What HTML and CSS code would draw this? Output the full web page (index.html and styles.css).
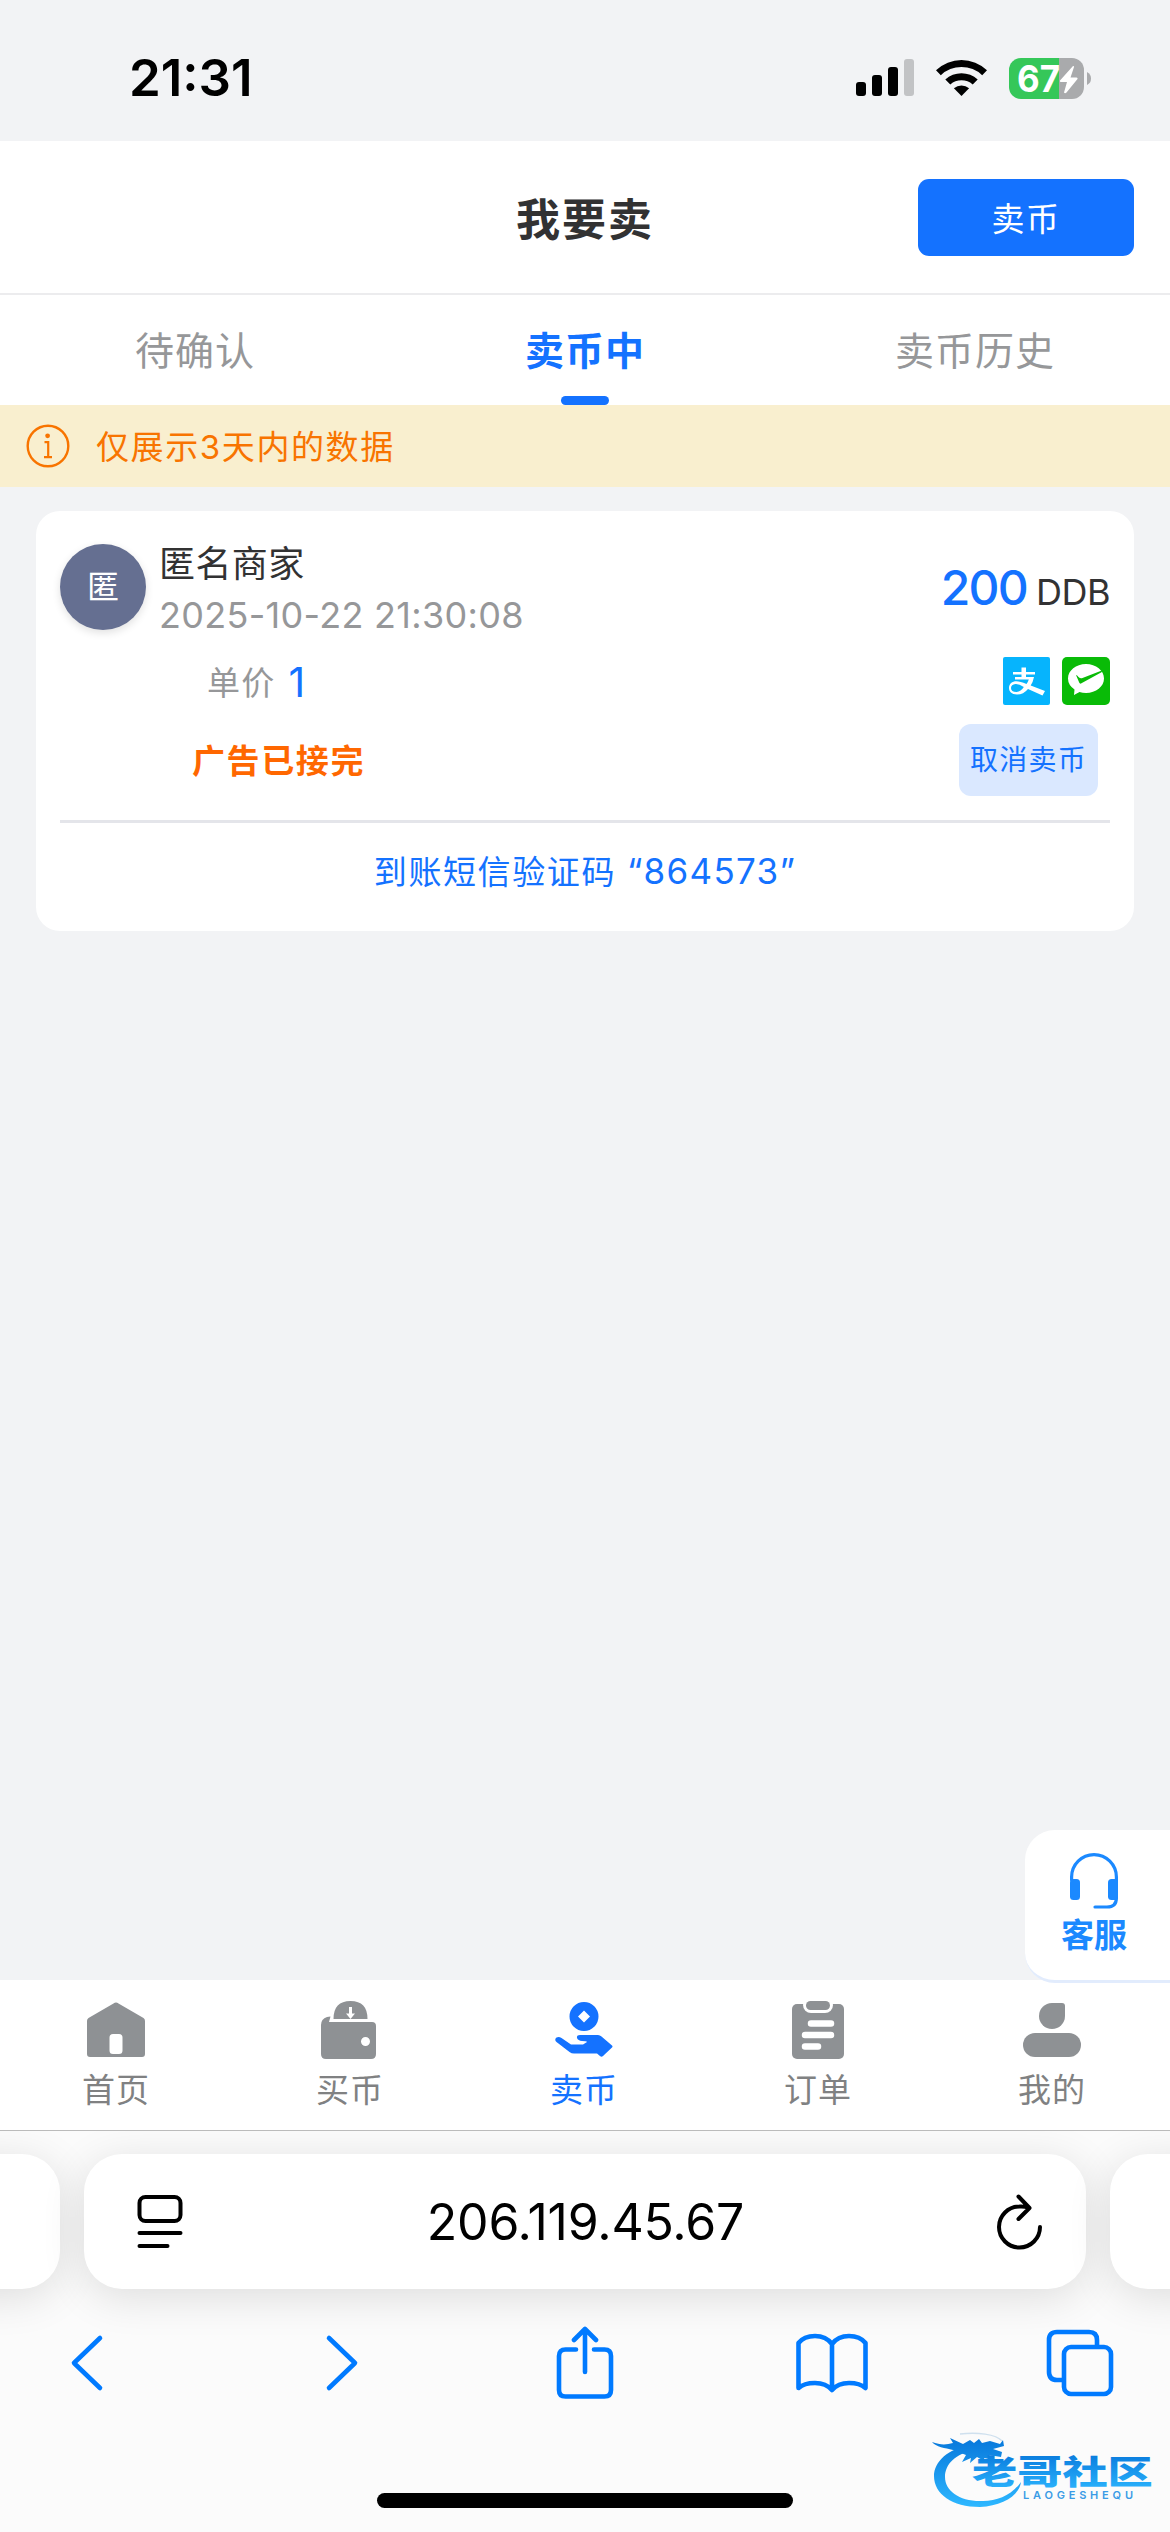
FILE: index.html
```html
<!DOCTYPE html>
<html lang="zh-CN">
<head>
<meta charset="utf-8">
<title>我要卖</title>
<link rel="stylesheet" href="styles.css">
</head>
<body>
<div class="screen">
  <header class="status">
    <span class="clock">21:31</span>
    <div class="status-icons">
      <svg class="signal" width="58" height="38" viewBox="0 0 58 38">
        <rect x="0" y="23" width="10" height="14" rx="3"/><rect x="16" y="16" width="10" height="21" rx="3"/>
        <rect x="32" y="8" width="10" height="29" rx="3"/><rect x="48" y="0" width="10" height="37" rx="3" fill="#c2c3c5"/>
      </svg>
      <svg class="wifi" width="52" height="38" viewBox="0 0 52 38">
        <path d="M0 11.2A37 37 0 0 1 51 11.2L46.200 16.200A30 30 0 0 0 4.800 16.200Z"/>
        <path d="M9.300 20.500A24 24 0 0 1 41.700 20.500L36.700 25.500A17 17 0 0 0 14.300 25.500Z"/>
        <path d="M17.900 29.200A12.500 12.500 0 0 1 33.100 29.200L25.500 37Z"/>
      </svg>
      <svg class="battery" width="83" height="61" viewBox="0 -10 83 61">
        <path d="M12 0H50V41H12A12 12 0 0 1 0 29V12A12 12 0 0 1 12 0Z" fill="#35c759"/>
        <path d="M50 0H63A12 12 0 0 1 75 12V29A12 12 0 0 1 63 41H50Z" fill="#a9aaac"/>
        <path d="M78 14Q82 16 82 20.500T78 27Z" fill="#a9aaac"/>
        <text class="battery-text" x="8" y="34" textLength="43" lengthAdjust="spacingAndGlyphs">67</text>
        <path d="M64 8L51 22.500Q50.500 24 52 24H58L55 34.500Q56 36 57.500 34.500L68.500 21Q69 19.500 67.500 19.500H61.500L65 9Q65 7.500 64 8Z" fill="#fff"/>
      </svg>
    </div>
  </header>

  <div class="titlebar">
    <h1>我要卖</h1>
    <button class="sell-btn">卖币</button>
  </div>

  <nav class="tabs">
    <a class="tab">待确认</a>
    <a class="tab active">卖币中</a>
    <a class="tab">卖币历史</a>
  </nav>

  <div class="notice">
    <svg width="44" height="44" viewBox="0 0 44 44" fill="none" stroke="#f87400">
      <circle cx="22" cy="22" r="20.300" stroke-width="2.400"/>
      <circle cx="21.600" cy="11.800" r="2.400" fill="#f87400" stroke="none"/>
      <path d="M18.500 18.200H22.200V33M18 33.200H26" stroke-width="2.200"/>
    </svg>
    <span>仅展示3天内的数据</span>
  </div>

  <main class="content">
    <section class="card">
      <div class="merchant">
        <div class="avatar">匿</div>
        <div class="who"><div class="name">匿名商家</div><div class="date">2025-10-22 21:30:08</div></div>
        <div class="amount"><b>200</b><span>DDB</span></div>
      </div>
      <div class="price-row">
        <span class="price-label">单价</span><span class="price">1</span>
        <div class="pay">
          <svg width="47" height="48" viewBox="0 0 47 48">
            <rect width="47" height="48" rx="2" fill="#06b4fd"/>
            <path d="M18.500 10.500H23V15H32V17.500H23V20H31Q30 25 27.700 28.500L42 34L39.500 38.500L25 32Q20.500 37.500 14 37.500C8.500 37.500 6 34.500 6 31C6 27 9 24.300 13.500 24.300Q17 24.300 23.500 27Q25 25 25.800 22.500H12V20H18.500V17.500H10V15H18.500Z" fill="#fff"/>
            <path d="M20.800 30Q16 27 12.500 27Q8 27.500 8 31Q8 35 13.500 35Q18 34.500 20.800 30Z" fill="#06b4fd"/>
          </svg>
          <svg width="48" height="48" viewBox="0 0 48 48">
            <rect width="48" height="48" rx="5" fill="#09bb07"/>
            <path d="M24 7C14 7 6 13.500 6 21.500Q6 28 12.500 32.500L12 38L17.500 35Q20.500 36 24 36C34 36 42 29.500 42 21.500C42 13.500 34 7 24 7Z" fill="#fff"/>
            <path d="M14 18Q15 18 16.500 20Q18.500 22 20.500 21L40.500 13.300L39.500 15.200L19 26.500Q17.800 27 17.200 25.600Z" fill="#09bb07"/>
          </svg>
        </div>
      </div>
      <div class="state-row">
        <span class="state">广告已接完</span>
        <button class="cancel">取消卖币</button>
      </div>
      <div class="code">到账短信验证码 <span class="digits">“864573”</span></div>
    </section>
  </main>

  <aside class="service">
    <svg width="52" height="58" viewBox="0 0 52 58" fill="none" stroke="#1b89ff" stroke-width="3.200" stroke-linecap="round">
      <path d="M3.600 27V24A22.400 22.400 0 0 1 48.400 24V45Q48.400 54 39 54H27"/>
      <rect x="2" y="26" width="10" height="21" rx="3.500" fill="#1b89ff" stroke="none"/>
      <rect x="40" y="26" width="10" height="21" rx="3.500" fill="#1b89ff" stroke="none"/>
    </svg>
    <span>客服</span>
  </aside>

  <nav class="bottom">
    <a><svg width="60" height="60" viewBox="0 0 60 60"><path fill-rule="evenodd" d="M27.500 3.500Q30 1.700 32.500 3.500L57.500 18Q59 19 59 21V54Q59 57 56 57H4Q1 57 1 54V21Q1 19 2.500 18ZM27 34Q23.500 34 23.500 37.500V50.500Q23.500 54 27 54H33Q36.500 54 36.500 50.500V37.500Q36.500 34 33 34Z"/></svg><span>首页</span></a>
    <a><svg width="60" height="60" viewBox="0 0 60 60"><path fill-rule="evenodd" d="M1 25Q1 19 7 17L10.500 16.500L9 22H52Q56 22 56 26V54Q56 59 51 59H6Q1 59 1 54ZM45.500 37A4.500 4.500 0 1 0 45.500 46A4.500 4.500 0 1 0 45.500 37ZM13.500 19Q13.500 1 30.500 1T47.500 19ZM29 7V13.500H26L30.500 19L35 13.500H32V7Z"/></svg><span>买币</span></a>
    <a class="on"><svg width="60" height="60" viewBox="0 0 60 60"><path fill-rule="evenodd" d="M30 2A14.500 14.500 0 1 0 30 31A14.500 14.500 0 1 0 30 2ZM30 10.500L36 16.500L30 22.500L24 16.500ZM23 38Q22.500 35 26 35H44Q46 35 47.500 36.500L58 45.500Q59 46.500 58 47.500L49 56Q47.500 57.500 46 56L43 53.500H20Q17.500 53.500 15.500 52L2.500 42Q0 39.500 2.500 37.500Q5 36.500 7.500 38L17 44.500H29L33 42Q32.500 41 28 41Q24 40.500 23 38Z"/></svg><span>卖币</span></a>
    <a><svg width="60" height="60" viewBox="0 0 60 60"><rect x="4" y="4" width="52" height="55" rx="5"/><rect x="15" y="-3" width="30" height="16" rx="8" fill="#fff"/><rect x="18" y="1" width="24" height="9" rx="4.500"/><g stroke="#fff" stroke-width="6.500" stroke-linecap="round"><path d="M23 23.500H43M17 35H43M17 46.500H30"/></g></svg><span>订单</span></a>
    <a><svg width="60" height="60" viewBox="0 0 60 60"><path d="M30 3H40Q43 3 43 6V16A13 13 0 1 1 30 3Z"/><rect x="1" y="33" width="58" height="24" rx="12"/></svg><span>我的</span></a>
  </nav>

  <footer class="browser">
    <div class="address-row">
      <div class="peek"></div>
      <div class="address">
        <svg width="46" height="56" viewBox="0 0 46 56" fill="none" stroke="#000" stroke-width="4" stroke-linecap="round"><rect x="2.500" y="3" width="41" height="24" rx="6"/><path d="M2.500 39H43.500M2.500 52H30.500"/></svg>
        <span>206.119.45.67</span>
        <svg width="46" height="56" viewBox="0 0 46 56" fill="none" stroke="#000" stroke-width="4" stroke-linecap="round" stroke-linejoin="round"><path d="M43 33A20.500 20.500 0 1 1 22.500 12.500Q27 12 32 14M21.500 2.500L32.500 14L21.500 25"/></svg>
      </div>
      <div class="peek"></div>
    </div>
    <div class="tools">
      <svg width="34" height="58" viewBox="0 0 34 58"><path d="M30 4L4 29L30 54"/></svg>
      <svg width="34" height="58" viewBox="0 0 34 58"><path d="M4 4L30 29L4 54"/></svg>
      <svg width="60" height="74" viewBox="0 0 60 74"><path d="M21 23.500H10.500Q4 23.500 4 30V64Q4 70.500 10.500 70.500H49.500Q56 70.500 56 64V30Q56 23.500 49.500 23.500H39M30 46V4M19 14L30 3L41 14"/></svg>
      <svg width="74" height="64" viewBox="0 0 74 64"><path d="M37 13Q31 5 20 5Q9 5 3.500 12V57Q9 52 20 52Q31 52 37 59Q43 52 54 52Q65 52 70.500 57V12Q65 5 54 5Q43 5 37 13V59"/></svg>
      <svg width="70" height="68" viewBox="0 0 70 68"><path d="M18 51H12Q4 51 4 43V11Q4 3 12 3H44Q52 3 52 11V17"/><rect x="19" y="18" width="47" height="47" rx="7"/></svg>
    </div>
    <div class="home-bar"></div>
    <svg class="watermark" width="226" height="80" viewBox="0 0 226 80">
      <defs><linearGradient id="ink" x1="0" y1="0" x2="0" y2="1"><stop offset="0" stop-color="#0879dc"/><stop offset="1" stop-color="#2db7ff"/></linearGradient>
      <linearGradient id="ring" gradientUnits="userSpaceOnUse" x1="0" y1="10" x2="0" y2="76"><stop offset="0" stop-color="#0879dc"/><stop offset="1" stop-color="#2db7ff"/></linearGradient></defs>
      <path fill="url(#ring)" d="M38 16C16 18 2 32 2 46C2 64 20 77 48 77C70 76 87 66 89 52C80 65 66 71 51 71C28 72 13 61 13 47C13 34 24 23 42 21Z"/>
      <path fill="url(#ring)" d="M0 12C8 15 14 15 21 13L18 8L31 14L38 10L42 13L47 9L50 13L58 11L68 14L71 10L72 16L61 19L70 22L69 27L57 25L62 30L52 28L54 32L45 27L38 33L39 28L30 32L34 25L21 20C13 18 4 17 0 12Z"/>
      <path fill="none" stroke="#cfe0ee" stroke-width="1.500" d="M28 4C45 2 64 4 70 11"/>
      <text class="mark-cn" transform="translate(40 54) scale(1.370 1)" fill="url(#ink)">老哥社区</text>
      <text class="mark-en" x="91" y="69" textLength="110">LAOGESHEQU</text>
    </svg>
  </footer>
</div>
</body>
</html>
```
FILE: styles.css
```css
* { box-sizing: border-box; }
body { margin: 0; background: #f2f3f5; font-family: Inter, "Noto Sans CJK SC", sans-serif; color: #323233; }
h1 { margin: 0; }
svg { display: block; flex: none; }
button { border: 0; padding: 0; font-family: inherit; }

.screen { position: relative; width: 1170px; height: 2532px; display: flex; flex-direction: column; overflow: hidden; }

.status { height: 141px; padding: 15px 78px 0 129px; display: flex; align-items: center; justify-content: space-between; }
.clock { font-size: 51px; font-weight: 600; letter-spacing: 0; color: #000; line-height: 60px; }
.status-icons { display: flex; align-items: center; }
.wifi { margin-left: 22px; }
.battery { margin-left: 21px; }
.battery-text { font-size: 37px; font-weight: 700; fill: #fff; }

.titlebar { height: 154px; background: #fff; border-bottom: 2px solid #ececee; display: grid; grid-template-columns: 1fr 216px 1fr; align-items: center; padding: 0 36px; }
h1 { grid-column: 2; text-align: center; font-size: 44px; font-weight: 600; letter-spacing: 2px; line-height: 64px; margin-top: 6px; }
.sell-btn { justify-self: end; width: 216px; height: 77px; border-radius: 11px; background: #1472ff; color: #fff; font-size: 33px; letter-spacing: 1.500px; }

.tabs { height: 110px; background: #fff; display: flex; }
.tab { flex: 1; display: flex; flex-direction: column; align-items: center; font-size: 39px; line-height: 112px; letter-spacing: 1px; color: #969799; }
.tab.active { color: #1472ff; font-weight: 600; }
.tab.active::after { content: ""; width: 48px; height: 9px; margin-top: -11px; border-radius: 5px; background: #1472ff; }

.notice { height: 82px; background: #f9efcf; color: #f87400; padding-left: 26px; display: flex; align-items: center; gap: 26px; font-size: 33px; letter-spacing: 1.600px; }
.notice span { padding-bottom: 3px; }

.content { flex: 1; padding: 24px 36px; }
.card { height: 420px; padding: 24px 24px 0; border-radius: 24px; background: #fff; }
.merchant { height: 104px; display: flex; align-items: center; }
.avatar { width: 86px; height: 86px; border-radius: 50%; background: #656f91; color: #fff; font-size: 32px; line-height: 86px; text-align: center; box-shadow: 0 3px 9px rgba(0,0,0,.12); }
.who { flex: 1; margin-left: 13px; padding-top: 6px; line-height: 51px; font-size: 36px; }
.name { letter-spacing: .400px; }
.date { color: #969799; letter-spacing: .300px; }
.amount { display: flex; align-items: baseline; gap: 9px; font-size: 36px; letter-spacing: -.500px; }
.amount b { color: #1472ff; font-size: 48px; font-weight: 500; letter-spacing: -1.800px; }
.price-row { height: 85px; display: flex; align-items: center; padding-left: 147px; }
.price-label { color: #969799; font-size: 33px; letter-spacing: 1.300px; padding-bottom: 2px; }
.price { margin-left: 13px; color: #1472ff; font-size: 41px; }
.pay { margin-left: auto; display: flex; gap: 12px; padding-bottom: 2px; }
.state-row { height: 72px; display: flex; align-items: center; justify-content: space-between; padding: 0 12px 0 132px; }
.state { color: #ff6700; font-size: 33px; font-weight: 700; letter-spacing: 1.600px; padding-bottom: 3px; }
.cancel { width: 139px; height: 72px; padding-bottom: 4px; border-radius: 12px; background: #dae8ff; color: #1472ff; font-size: 28px; letter-spacing: 1.300px; }
.code { margin-top: 24px; border-top: 3px solid #e4e5ea; text-align: center; color: #1472ff; font-size: 33px; letter-spacing: 1.600px; line-height: 96px; }
.digits { font-size: 35px; letter-spacing: 1.300px; }

.service { position: absolute; right: 0; top: 1830px; width: 145px; height: 153px; border-radius: 30px 0 0 30px; background: #fff; border-bottom: 3px solid #e2ecfd; padding: 23px 7px 0 0; display: flex; flex-direction: column; align-items: center; color: #1b89ff; font-size: 33px; font-weight: 700; line-height: 48px; z-index: 1; }

.bottom { height: 150px; background: #fff; display: flex; }
.bottom a { flex: 1; padding: 20px 2px 0 0; display: flex; flex-direction: column; align-items: center; gap: 6px; color: #808182; fill: #8e9194; font-size: 33px; letter-spacing: 1px; line-height: 48px; }
.bottom .on { color: #1472ff; fill: #1472ff; }

.browser { position: relative; height: 402px; border-top: 1px solid #bbb; background: #fbfbfb; overflow: hidden; }
.address-row { display: flex; gap: 24px; padding-top: 23px; }
.peek { width: 132px; flex: none; }
.peek, .address { height: 135px; border-radius: 38px; background: #fff; box-shadow: 0 8px 44px rgba(0,0,0,.12); }
.peek:first-child { margin-left: -72px; }
.address { width: 1002px; flex: none; padding: 0 43px 0 53px; display: flex; align-items: center; justify-content: space-between; color: #000; font-size: 50px; letter-spacing: -.200px; }
.address span { margin-right: 9px; }
.tools { position: relative; padding-top: 7px; height: 140px; display: grid; grid-template-columns: 174px 335px 152px 342px 153px; align-items: center; justify-items: center; fill: none; stroke: #007aff; stroke-width: 4.600; stroke-linecap: round; stroke-linejoin: round; }
.home-bar { width: 416px; height: 15px; margin: 64px auto 0; border-radius: 8px; background: #000; }
.watermark { position: absolute; left: 932px; top: 299px; }
.mark-cn { font-size: 33px; font-weight: 900; }
.mark-en { font-size: 11px; font-weight: 600; fill: #3a9be6; }
```
